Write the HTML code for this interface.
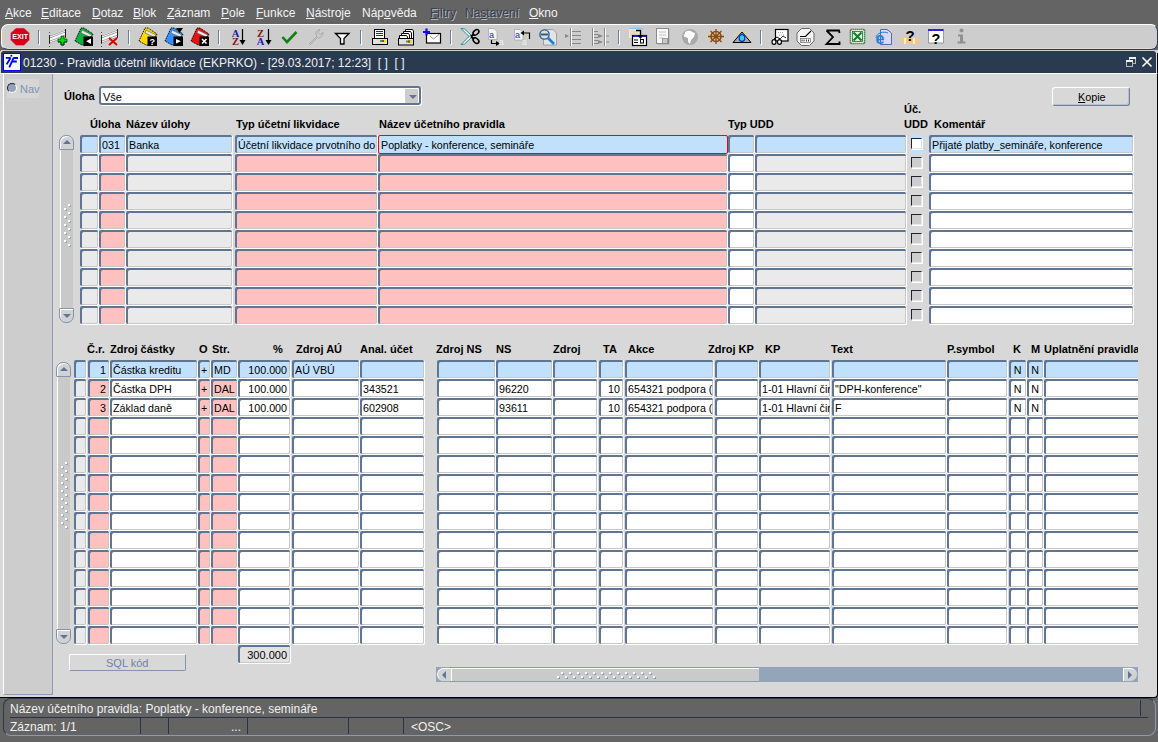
<!DOCTYPE html><html><head><meta charset='utf-8'><style>
*{margin:0;padding:0;box-sizing:border-box}
html,body{width:1158px;height:742px;overflow:hidden;background:#646464;font-family:"Liberation Sans", sans-serif;}
.a{position:absolute}
.t{position:absolute;white-space:pre;line-height:1}
.c{position:absolute;height:19px;border-radius:2px;padding-top:2px;padding-left:3px;border-right:1px solid #fff;border-bottom:1px solid #fff;box-shadow:inset 2px 2px 0 #607593,inset -1px -1px 0 #c8c8c8;overflow:hidden;font-size:10.7px;color:#000;white-space:pre;line-height:17px}
.bl{background:#c0e0fc}
.pk{background:#ffc0c0}
.gr{background:#eaeaea}
.wh{background:#fff}
.hd{position:absolute;font-size:11px;font-weight:bold;white-space:pre;line-height:1;color:#000}
.menu{position:absolute;top:6.5px;font-size:12px;color:#f4f4f4;white-space:pre;line-height:1}
.menu u{text-decoration:underline;text-underline-offset:1px;text-decoration-thickness:1px}
</style></head><body>
<div class='menu' style='left:5px;color:#f4f4f4'><u>A</u>kce</div>
<div class='menu' style='left:41px;color:#f4f4f4'><u>E</u>ditace</div>
<div class='menu' style='left:92px;color:#f4f4f4'><u>D</u>otaz</div>
<div class='menu' style='left:133px;color:#f4f4f4'><u>B</u>lok</div>
<div class='menu' style='left:167px;color:#f4f4f4'><u>Z</u>áznam</div>
<div class='menu' style='left:221px;color:#f4f4f4'><u>P</u>ole</div>
<div class='menu' style='left:256px;color:#f4f4f4'><u>F</u>unkce</div>
<div class='menu' style='left:306px;color:#f4f4f4'><u>N</u>ástroje</div>
<div class='menu' style='left:362px;color:#f4f4f4'>Náp<u>o</u>věda</div>
<div class='menu' style='left:430px;color:#34405a;text-shadow:1px 1px 0 #b4b4b4'><u>F</u>iltry</div>
<div class='menu' style='left:465px;color:#34405a;text-shadow:1px 1px 0 #b4b4b4'>Na<u>s</u>tavení</div>
<div class='menu' style='left:529px;color:#f4f4f4'><u>O</u>kno</div>
<div class='a' style='left:0;top:23px;width:1158px;height:28px;background:#646464'></div>
<div class='a' style='left:1px;top:24px;width:1157px;height:26px;background:#cdcdcd;border-radius:7px;border-top:1px solid #fff;border-left:1px solid #fff;border-bottom:1px solid #2a3a50;border-right:1px solid #2a3a50;box-shadow:inset 0 -1px 0 #dcdcdc'></div>
<div class='a' style='left:1px;top:50px;width:1157px;height:1px;background:#d0d0d0'></div>
<svg class='a' style='left:0;top:0' width='1158' height='50'><polygon points='16,28 24,28 29.5,33 29.5,40 24,45.5 16,45.5 10.5,40 10.5,33' fill='#d6001c' stroke='#a8c8c0' stroke-width='0.5'/><text x='20.2' y='39' font-size='7.2' font-weight='bold' fill='#fff' text-anchor='middle' font-family='Liberation Sans' letter-spacing='0'>EXIT</text><rect x='38' y='30' width='1' height='14' fill='#6a7f9c'/><rect x='39' y='31' width='1' height='14' fill='#fff'/><rect x='128' y='30' width='1' height='14' fill='#6a7f9c'/><rect x='129' y='31' width='1' height='14' fill='#fff'/><rect x='218' y='30' width='1' height='14' fill='#6a7f9c'/><rect x='219' y='31' width='1' height='14' fill='#fff'/><rect x='360' y='30' width='1' height='14' fill='#6a7f9c'/><rect x='361' y='31' width='1' height='14' fill='#fff'/><rect x='450' y='30' width='1' height='14' fill='#6a7f9c'/><rect x='451' y='31' width='1' height='14' fill='#fff'/><rect x='618' y='30' width='1' height='14' fill='#6a7f9c'/><rect x='619' y='31' width='1' height='14' fill='#fff'/><rect x='760' y='30' width='1' height='14' fill='#6a7f9c'/><rect x='761' y='31' width='1' height='14' fill='#fff'/><g transform='translate(49,29)'><polygon points='0.5,6.5 16.5,0.5 16.5,8.5 0.5,14.5' fill='#fff'/><path d='M0.5,7.2 L16.5,1.2 M0.5,9 L16.5,3 M0.5,12.2 L16.5,6.2 M0.5,14 L16.5,8' stroke='#8a8a8a' stroke-width='0.8'/><path d='M0.5,6 V14.8 M16.5,0 V8.8' stroke='#222' stroke-width='1'/><path d='M0.5,3 V4 M0.5,17 V18' stroke='#555' stroke-width='1'/></g><path d='M58,39 h3 v-3 h3 v3 h3 v3 h-3 v3 h-3 v-3 h-3 z' fill='#00e000' stroke='#003828' stroke-width='0.7'/><path d='M58,42 h3 v3 h3 v-3 h3' stroke='#003020' stroke-width='0.8' fill='none'/><g transform='translate(75,28)'><polygon points='0,13 6,0 9,0 18,6 17,8 9,17 7,17' fill='#10b040' stroke='#000' stroke-width='1' stroke-dasharray='1.2,0.8'/><polygon points='7,2 17,7 15,9 6,5' fill='#e8e8e8' stroke='#555' stroke-width='0.6'/><rect x='8.5' y='8.5' width='9.5' height='9.5' fill='#000'/><polygon points='16,10.5 11,13.3 16,16' fill='#fff'/></g><g transform='translate(101,29)'><polygon points='0.5,6.5 16.5,0.5 16.5,8.5 0.5,14.5' fill='#fff'/><path d='M0.5,7.2 L16.5,1.2 M0.5,9 L16.5,3 M0.5,12.2 L16.5,6.2 M0.5,14 L16.5,8' stroke='#8a8a8a' stroke-width='0.8'/><path d='M0.5,6 V14.8 M16.5,0 V8.8' stroke='#222' stroke-width='1'/><path d='M0.5,3 V4 M0.5,17 V18' stroke='#555' stroke-width='1'/></g><path d='M109,38 L117,45 M117,38 L109,45' stroke='#e00000' stroke-width='2'/><g transform='translate(139,28)'><polygon points='0,13 6,0 9,0 18,6 17,8 9,17 7,17' fill='#ffd800' stroke='#000' stroke-width='1' stroke-dasharray='1.2,0.8'/><polygon points='7,2 17,7 15,9 6,5' fill='#e8e8e8' stroke='#555' stroke-width='0.6'/><rect x='8.5' y='8.5' width='9.5' height='9.5' fill='#000'/><text x='13.3' y='16.6' font-size='9' font-weight='bold' fill='#fff' text-anchor='middle' font-family='Liberation Sans'>?</text></g><g transform='translate(165,28)'><polygon points='0,13 6,0 9,0 18,6 17,8 9,17 7,17' fill='#3090ff' stroke='#000' stroke-width='1' stroke-dasharray='1.2,0.8'/><polygon points='7,2 17,7 15,9 6,5' fill='#e8e8e8' stroke='#555' stroke-width='0.6'/><rect x='8.5' y='8.5' width='9.5' height='9.5' fill='#000'/><polygon points='11,11 16,13.3 11,15.6' fill='#fff'/><polygon points='11,0 18,0 14.5,5' fill='#000'/></g><g transform='translate(191,28)'><polygon points='0,13 6,0 9,0 18,6 17,8 9,17 7,17' fill='#ee1010' stroke='#000' stroke-width='1' stroke-dasharray='1.2,0.8'/><polygon points='7,2 17,7 15,9 6,5' fill='#e8e8e8' stroke='#555' stroke-width='0.6'/><rect x='8.5' y='8.5' width='9.5' height='9.5' fill='#000'/><path d='M11,11 L15.5,15.5 M15.5,11 L11,15.5' stroke='#fff' stroke-width='1.6'/></g><text x='235.5' y='36.5' font-size='10.5' font-weight='bold' fill='#1818a0' text-anchor='middle' font-family='Liberation Serif'>A</text><text x='235.5' y='44.5' font-size='10.5' font-weight='bold' fill='#8a1010' text-anchor='middle' font-family='Liberation Serif'>Z</text><path d='M242.5,29 V41' stroke='#000' stroke-width='1.2'/><polygon points='239.5,40 245.5,40 242.5,45' fill='#000'/><text x='260.5' y='36.5' font-size='10.5' font-weight='bold' fill='#8a1010' text-anchor='middle' font-family='Liberation Serif'>Z</text><text x='260.5' y='44.5' font-size='10.5' font-weight='bold' fill='#1818a0' text-anchor='middle' font-family='Liberation Serif'>A</text><path d='M268.5,29 V41' stroke='#000' stroke-width='1.2'/><polygon points='265.5,40 271.5,40 268.5,45' fill='#000'/><path d='M282.5,37 L287,42 L296.5,32' stroke='#108010' stroke-width='2.6' fill='none'/><path d='M309,44 L317,36 C315,33 316,30 320,29.5 L318,32.5 L320,34.5 L323,32.5 C323.5,36 320,38.5 317.5,37.5 L310,45' stroke='#a8a8a8' stroke-width='1' fill='none'/><polygon points='335.5,33.5 349,33.5 344,38.5 344,44 340.5,44 340.5,38.5' fill='#fff' stroke='#000' stroke-width='1.3'/><rect x='374.5' y='29.5' width='10' height='9' fill='#fff' stroke='#000'/><path d='M376,31.5 h7 M376,33.5 h7 M376,35.5 h7' stroke='#2020c8' stroke-width='1'/><rect x='372.5' y='38.5' width='15' height='6' fill='#e0e0e0' stroke='#000'/><rect x='380' y='40' width='6' height='2' fill='#20c020'/><rect x='382' y='40' width='2' height='2' fill='#e02020'/><rect x='384' y='40' width='2' height='2' fill='#f0e020'/><path d='M405.5,38 V29.5 H412.5 L413.5,31 V38' fill='#fff' stroke='#000'/><path d='M403.5,38 V31.5 H410.5 L411.5,33 V38' fill='#fff' stroke='#000'/><path d='M401.5,38 V33.5 H408.5 L409.5,35 V38' fill='#fff' stroke='#000'/><path d='M399.5,38 V35.5 H406.5 L407.5,37 V38' fill='#fff' stroke='#000'/><rect x='398.5' y='38.5' width='15' height='6.5' fill='#e0e0e0' stroke='#000'/><rect x='406' y='40.5' width='6' height='2' fill='#20c020'/><rect x='408' y='40.5' width='2' height='2' fill='#e02020'/><rect x='410' y='40.5' width='2' height='2' fill='#f0e020'/><rect x='426.5' y='33.5' width='14' height='9.5' fill='#fff' stroke='#000' stroke-width='1.2'/><path d='M430,36 L433.5,39 L439,34.5' stroke='#444' stroke-width='0.6' fill='none'/><path d='M423,32 h7 M426.5,28.5 v7' stroke='#1010e0' stroke-width='2.2'/><polygon points='461,28.5 464.5,29 472,36 470,37.5' fill='#e8ffff' stroke='#2a8a8a' stroke-width='1'/><polygon points='461,44.5 464.5,44 472,37 470,35.5' fill='#e8ffff' stroke='#2a8a8a' stroke-width='1'/><path d='M471,36.5 L474,34 M471,36.5 L474,39' stroke='#000' stroke-width='2'/><ellipse cx='476' cy='32.3' rx='3.3' ry='2.2' transform='rotate(-40 476 32.3)' fill='none' stroke='#000' stroke-width='1.5'/><ellipse cx='476' cy='40.7' rx='3.3' ry='2.2' transform='rotate(40 476 40.7)' fill='none' stroke='#000' stroke-width='1.5'/><path d='M488.5,28.5 H494 L497,31.5 V39.5 H488.5 Z' fill='#f4f4f4' stroke='#999' stroke-width='0.6'/><text x='489' y='38' font-size='9' fill='#1818e8' font-family='Liberation Sans'>a</text><path d='M491.5,40 V43.5 H496' stroke='#000' stroke-width='1.2' fill='none'/><polygon points='496,41 500,43.5 496,46' fill='#000'/><text x='499' y='45' font-size='8.5' fill='#f0f0f0' font-family='Liberation Sans'>a</text><path d='M514.5,29.5 H520 L523,32.5 V40 H514.5 Z' fill='#f4f4f4' stroke='#999' stroke-width='0.6'/><text x='515' y='38' font-size='9' fill='#1818e8' font-family='Liberation Sans'>a</text><path d='M524,33 H529.5 V39' stroke='#000' stroke-width='1.2' fill='none'/><polygon points='524,30.5 520.5,33 524,35.5' fill='#000'/><text x='522' y='45' font-size='8.5' fill='#f0f0f0' font-family='Liberation Sans'>a</text><path d='M543.5,29.5 H553 L556.5,33 V45 H543.5 Z' fill='#e4e4e4' stroke='#888' stroke-width='0.7'/><circle cx='544.5' cy='34.5' r='4.6' fill='#c8e8f0' stroke='#3a5a8a' stroke-width='1.4'/><rect x='541' y='33.5' width='7' height='2' fill='#555'/><path d='M548,38 L554,44' stroke='#1880e0' stroke-width='2.6'/><path d='M570.5,28 V46' stroke='#888' stroke-width='1'/><path d='M571.5,28 V46' stroke='#fff' stroke-width='1'/><path d='M572,31.5 h9 M572,35.5 h9 M572,39.5 h9 M572,43.5 h9' stroke='#888' stroke-width='1'/><polygon points='565,34 569,36 565,38' fill='#888'/><path d='M592.5,28 V46 M604.5,28 V46' stroke='#888' stroke-width='1'/><path d='M593.5,28 V46 M605.5,28 V46' stroke='#fff' stroke-width='1'/><path d='M594,31.5 h4 M594,34.5 h4 M594,37.5 h4 M594,40.5 h4 M594,43.5 h4 M606,36 h3 M606,42 h3' stroke='#888' stroke-width='1'/><polygon points='598,34 603,36 598,38' fill='#888'/><polygon points='598,40 603,42 598,44' fill='#888'/><rect x='629' y='28' width='12' height='10' fill='#f4e8d8'/><rect x='629' y='28' width='14' height='1' fill='#80c8f0'/><path d='M630,31 h8 M630,33 h8 M630,35 h6' stroke='#d8c8b0' stroke-width='0.8'/><rect x='632.5' y='35.5' width='14' height='10' fill='#fff' stroke='#000' stroke-width='1.2'/><rect x='633' y='35' width='13.5' height='2' fill='#1020c0'/><path d='M634,40 h4 M634,42.5 h4' stroke='#000' stroke-width='1'/><rect x='640.5' y='39.5' width='3' height='3.5' fill='none' stroke='#000' stroke-width='1'/><path d='M636,30.5 H640.5 V37' stroke='#000' stroke-width='1.3' fill='none'/><polygon points='637.5,35 643.5,35 640.5,39' fill='#000'/><rect x='658.5' y='29.5' width='11' height='15' fill='#aaa'/><rect x='656.5' y='28.5' width='12' height='15' fill='#fafafa' stroke='#8a8a8a' stroke-width='1'/><path d='M659,32 h7 M659,35 h7 M659,38 h4' stroke='#b0b0b0' stroke-width='0.8'/><rect x='662.5' y='38.5' width='5' height='5' fill='#c8c8c8' stroke='#8a8a8a' stroke-width='0.8'/><circle cx='690' cy='37' r='8' fill='#a8a8a8'/><path d='M685,32 C687,31 690,30 692,32 L695,33 L694,37 L691,40 L690,44 L688,42 L688,38 L685,37 Z' fill='#fff'/><path d='M684,34 L685,37' stroke='#fff' stroke-width='1'/><g stroke='#8a4a10' fill='none'><circle cx='716' cy='36.5' r='5' stroke-width='1.6'/><path d='M708,36.5 H724 M716,29 V44 M710.5,31 L721.5,42 M721.5,31 L710.5,42' stroke-width='1.3'/></g><circle cx='716' cy='36.5' r='1.5' fill='#8a4a10'/><polygon points='733,42.5 742,32 751,42.5' fill='#a8a8a8' stroke='#000' stroke-width='1'/><ellipse cx='742' cy='38' rx='2.8' ry='3.3' fill='#20d8f0' stroke='#1030c0' stroke-width='1.2'/><path d='M735,34 l1,1 M737,31.5 l1,1 M742,30 v1 M746.5,31.5 l-1,1 M749,34 l-1,1' stroke='#f0f000' stroke-width='1'/><rect x='775.5' y='29.5' width='12.5' height='11.5' fill='#fff' stroke='#000' stroke-width='1.2'/><path d='M778,32.5 h6 M779,35 h5' stroke='#888' stroke-width='0.8' stroke-dasharray='1,1'/><path d='M780,39 L783,36 L786,38' stroke='#000' stroke-width='0.8' fill='none'/><ellipse cx='774' cy='42' rx='2' ry='2.3' fill='#fff' stroke='#000' stroke-width='1.2'/><ellipse cx='779.5' cy='42' rx='2' ry='2.3' fill='#fff' stroke='#000' stroke-width='1.2'/><path d='M774,39 L777,37 L780,39' stroke='#000' stroke-width='1' fill='none'/><polygon points='801.5,28.5 809.5,28.5 814,33 814,41 809.5,45.5 801.5,45.5 797,41 797,33' fill='#f4f4f4' stroke='#6a6a6a' stroke-width='1'/><path d='M800,36.5 H805.5 L811,31' stroke='#000' stroke-width='1.2' fill='none'/><rect x='800.5' y='38.5' width='10' height='4' fill='#fff' stroke='#555' stroke-width='0.6'/><path d='M802,39.5 v2 M804,39.5 v2 M806.5,39.5 v2 M808.5,39.5 v2' stroke='#000' stroke-width='0.8'/><path d='M826.5,30.5 H839 L839.5,33 M826.5,30.5 L833,37 L826.5,44 H839.5 L839.5,41.5' stroke='#000' stroke-width='1.8' fill='none'/><rect x='850.5' y='29.5' width='14' height='14' fill='#fff' stroke='#107020' stroke-width='1.6' stroke-dasharray='1.2,0.8'/><rect x='852.5' y='31.5' width='10' height='10' fill='#e8f4e8' stroke='#107020' stroke-width='0.8'/><path d='M853.5,32.5 L861.5,40.5 M861.5,32.5 L853.5,40.5' stroke='#108030' stroke-width='2.2'/><path d='M880.5,29.5 H887 L891.5,33 V44.5 H880.5 Z' fill='#d8d8f8' stroke='#5a6aa8' stroke-width='1'/><text x='875.5' y='43.5' font-size='16' font-weight='bold' fill='#2080e0' font-family='Liberation Sans'>e</text><path d='M876,38 C876,33 884,31 888,33' stroke='#2080e0' stroke-width='1' fill='none'/><rect x='901' y='38' width='18' height='6' fill='#f8c880'/><rect x='904' y='38' width='2' height='6' fill='#fff0d0'/><rect x='913' y='38' width='2' height='6' fill='#fff0d0'/><text x='910' y='40.5' font-size='15' font-weight='bold' fill='#000' text-anchor='middle' font-family='Liberation Sans'>?</text><rect x='928.5' y='30' width='15' height='13' fill='#fff' stroke='#888' stroke-width='0.8'/><rect x='928' y='29' width='15.5' height='2' fill='#3020e0'/><text x='936' y='43.6' font-size='14.5' font-weight='bold' fill='#000' text-anchor='middle' font-family='Liberation Sans'>?</text><circle cx='961.5' cy='30.5' r='2' fill='#909090'/><path d='M958,34.5 H963 V41.5 H965.5 V43.5 H957.5 V41.5 H960 V36.5 H958 Z' fill='#909090'/></svg>
<div class='a' style='left:0;top:51px;width:1158px;height:22px;background:#d8d8d8'></div>
<div class='a' style='left:1px;top:51px;width:1155px;height:22px;background:#2a3a50;border-radius:3px 3px 0 0'></div>
<div class='a' style='left:1157px;top:53px;width:1px;height:22px;background:#000'></div>
<div class='a' style='left:3px;top:53px;width:18px;height:18px;background:#f6f6ee;border:1px solid #0000ff'></div>
<svg class='a' style='left:0;top:50px' width='24' height='24'><path d='M5.8,7.9 H10.8 M10.4,8.2 L6.6,14.4 M13.3,8 H18 M12.1,11.5 H16.8 M13.6,7.8 L9.3,17.4' stroke='#0000f0' stroke-width='1.8' fill='none'/><circle cx='11.4' cy='5.7' r='1' fill='#0000f0'/></svg>
<div class='t' style='left:23px;top:57px;font-size:12px;color:#f0f0f0'>01230 - Pravidla účetní likvidace (EKPRKO) - [29.03.2017; 12:23]  [ ]  [ ]</div>
<svg class='a' style='left:1120px;top:50px' width='38' height='26'><rect x='9.5' y='7.5' width='6' height='6' fill='none' stroke='#b8b8b8' stroke-width='1'/><rect x='9' y='7' width='7' height='2' fill='#f0f0f0'/><rect x='6.5' y='10.5' width='6' height='6' fill='#2a3a50' stroke='#b8b8b8' stroke-width='1'/><rect x='6' y='10' width='7' height='2' fill='#f0f0f0'/><path d='M22.5,7.5 L31.5,16.5 M31.5,7.5 L22.5,16.5' stroke='#fff' stroke-width='1.6'/></svg>
<div class='a' style='left:0px;top:73px;width:1158px;height:625px;background:#d8d8d8;border-top:1px solid #fff;border-right:1px solid #000;border-bottom:1px solid #000;border-radius:0 0 4px 0'></div>
<div class='a' style='left:3px;top:74px;width:50px;height:621px;background:#cdcdcd;border-left:1px solid #fff;border-right:1px solid #8a9bb4;border-bottom:1px solid #8a9bb4'></div>
<div class='a' style='left:7px;top:79px;width:32px;height:19px;background:#d6d6d6'></div>
<div class='a' style='left:7px;top:83px;width:10px;height:10px;border-radius:50%;background:#92a4bb;border-top:1px solid #223;border-left:1px solid #223;border-right:1px solid #fff;border-bottom:1px solid #fff'></div>
<div class='t' style='left:20px;top:84px;font-size:11px;color:#7f93b0'>Nav</div>
<div class='hd' style='left:64px;top:91px'>Úloha</div>
<div class='a' style='left:99px;top:86px;width:322px;height:19px;background:#fff;border:2px solid #607593;border-radius:3px;box-shadow:1px 1px 0 #fff'></div>
<div class='t' style='left:103px;top:92px;font-size:11px'>Vše</div>
<div class='a' style='left:405px;top:89px;width:13px;height:14px;background:#cccccc'></div>
<div class='a' style='left:409px;top:95px;width:0;height:0;border-left:4px solid transparent;border-right:4px solid transparent;border-top:4px solid #607593'></div>
<div class='a' style='left:1052px;top:87px;width:78px;height:19px;border-top:1px solid #fff;border-left:1px solid #fff;border-right:1px solid #6d7f99;border-bottom:1px solid #6d7f99;border-radius:3px;box-shadow:inset -1px -1px 0 #b8c0cc'></div>
<div class='t' style='left:1078px;top:92px;font-size:10.8px'><span style='text-decoration:underline'>K</span>opie</div>
<div class='hd' style='left:90px;top:119px'>Úloha</div>
<div class='hd' style='left:126px;top:119px'>Název úlohy</div>
<div class='hd' style='left:236px;top:119px'>Typ účetní likvidace</div>
<div class='hd' style='left:379px;top:119px'>Název účetního pravidla</div>
<div class='hd' style='left:728px;top:119px'>Typ UDD</div>
<div class='hd' style='left:904px;top:104px'>Úč.</div>
<div class='hd' style='left:904px;top:119px'>UDD</div>
<div class='hd' style='left:934px;top:119px'>Komentář</div>
<div class='c bl' style='left:80px;top:135px;width:19px;'></div>
<div class='c bl' style='left:99px;top:135px;width:27px;'>031</div>
<div class='c bl' style='left:126px;top:135px;width:107px;'>Banka</div>
<div class='c bl' style='left:235px;top:135px;width:143px;'>Účetní likvidace prvotního do</div>
<div class='c bl' style='left:378px;top:135px;width:350px;border:1px solid #f00;box-shadow:none;padding-left:2px;padding-top:1px;'>Poplatky - konference, semináře</div>
<div class='c bl' style='left:728px;top:135px;width:27px;'></div>
<div class='c bl' style='left:755px;top:135px;width:152px;'></div>
<div class='c bl' style='left:929px;top:135px;width:205px;'>Přijaté platby_semináře, konference</div>
<div class='a' style='left:911px;top:135px;width:13px;height:19px;background:#c0e0fc'></div>
<div class='a' style='left:911px;top:138px;width:11px;height:11px;background:#fff;border-top:1px solid #223;border-left:1px solid #223;border-right:1px solid #e4e4e4;border-bottom:1px solid #e4e4e4;box-shadow:1px 1px 0 #fff'></div>
<div class='c gr' style='left:80px;top:154px;width:19px;'></div>
<div class='c pk' style='left:99px;top:154px;width:27px;'></div>
<div class='c gr' style='left:126px;top:154px;width:107px;'></div>
<div class='c pk' style='left:235px;top:154px;width:143px;'></div>
<div class='c pk' style='left:378px;top:154px;width:350px;'></div>
<div class='c wh' style='left:728px;top:154px;width:27px;'></div>
<div class='c gr' style='left:755px;top:154px;width:152px;'></div>
<div class='c wh' style='left:929px;top:154px;width:205px;'></div>
<div class='a' style='left:911px;top:157px;width:11px;height:11px;background:#cdcdcd;border-top:1px solid #223;border-left:1px solid #223;border-right:1px solid #e8e8e8;border-bottom:1px solid #e8e8e8;box-shadow:1px 1px 0 #fff'></div>
<div class='c gr' style='left:80px;top:173px;width:19px;'></div>
<div class='c pk' style='left:99px;top:173px;width:27px;'></div>
<div class='c gr' style='left:126px;top:173px;width:107px;'></div>
<div class='c pk' style='left:235px;top:173px;width:143px;'></div>
<div class='c pk' style='left:378px;top:173px;width:350px;'></div>
<div class='c wh' style='left:728px;top:173px;width:27px;'></div>
<div class='c gr' style='left:755px;top:173px;width:152px;'></div>
<div class='c wh' style='left:929px;top:173px;width:205px;'></div>
<div class='a' style='left:911px;top:176px;width:11px;height:11px;background:#cdcdcd;border-top:1px solid #223;border-left:1px solid #223;border-right:1px solid #e8e8e8;border-bottom:1px solid #e8e8e8;box-shadow:1px 1px 0 #fff'></div>
<div class='c gr' style='left:80px;top:192px;width:19px;'></div>
<div class='c pk' style='left:99px;top:192px;width:27px;'></div>
<div class='c gr' style='left:126px;top:192px;width:107px;'></div>
<div class='c pk' style='left:235px;top:192px;width:143px;'></div>
<div class='c pk' style='left:378px;top:192px;width:350px;'></div>
<div class='c wh' style='left:728px;top:192px;width:27px;'></div>
<div class='c gr' style='left:755px;top:192px;width:152px;'></div>
<div class='c wh' style='left:929px;top:192px;width:205px;'></div>
<div class='a' style='left:911px;top:195px;width:11px;height:11px;background:#cdcdcd;border-top:1px solid #223;border-left:1px solid #223;border-right:1px solid #e8e8e8;border-bottom:1px solid #e8e8e8;box-shadow:1px 1px 0 #fff'></div>
<div class='c gr' style='left:80px;top:211px;width:19px;'></div>
<div class='c pk' style='left:99px;top:211px;width:27px;'></div>
<div class='c gr' style='left:126px;top:211px;width:107px;'></div>
<div class='c pk' style='left:235px;top:211px;width:143px;'></div>
<div class='c pk' style='left:378px;top:211px;width:350px;'></div>
<div class='c wh' style='left:728px;top:211px;width:27px;'></div>
<div class='c gr' style='left:755px;top:211px;width:152px;'></div>
<div class='c wh' style='left:929px;top:211px;width:205px;'></div>
<div class='a' style='left:911px;top:214px;width:11px;height:11px;background:#cdcdcd;border-top:1px solid #223;border-left:1px solid #223;border-right:1px solid #e8e8e8;border-bottom:1px solid #e8e8e8;box-shadow:1px 1px 0 #fff'></div>
<div class='c gr' style='left:80px;top:230px;width:19px;'></div>
<div class='c pk' style='left:99px;top:230px;width:27px;'></div>
<div class='c gr' style='left:126px;top:230px;width:107px;'></div>
<div class='c pk' style='left:235px;top:230px;width:143px;'></div>
<div class='c pk' style='left:378px;top:230px;width:350px;'></div>
<div class='c wh' style='left:728px;top:230px;width:27px;'></div>
<div class='c gr' style='left:755px;top:230px;width:152px;'></div>
<div class='c wh' style='left:929px;top:230px;width:205px;'></div>
<div class='a' style='left:911px;top:233px;width:11px;height:11px;background:#cdcdcd;border-top:1px solid #223;border-left:1px solid #223;border-right:1px solid #e8e8e8;border-bottom:1px solid #e8e8e8;box-shadow:1px 1px 0 #fff'></div>
<div class='c gr' style='left:80px;top:249px;width:19px;'></div>
<div class='c pk' style='left:99px;top:249px;width:27px;'></div>
<div class='c gr' style='left:126px;top:249px;width:107px;'></div>
<div class='c pk' style='left:235px;top:249px;width:143px;'></div>
<div class='c pk' style='left:378px;top:249px;width:350px;'></div>
<div class='c wh' style='left:728px;top:249px;width:27px;'></div>
<div class='c gr' style='left:755px;top:249px;width:152px;'></div>
<div class='c wh' style='left:929px;top:249px;width:205px;'></div>
<div class='a' style='left:911px;top:252px;width:11px;height:11px;background:#cdcdcd;border-top:1px solid #223;border-left:1px solid #223;border-right:1px solid #e8e8e8;border-bottom:1px solid #e8e8e8;box-shadow:1px 1px 0 #fff'></div>
<div class='c gr' style='left:80px;top:268px;width:19px;'></div>
<div class='c pk' style='left:99px;top:268px;width:27px;'></div>
<div class='c gr' style='left:126px;top:268px;width:107px;'></div>
<div class='c pk' style='left:235px;top:268px;width:143px;'></div>
<div class='c pk' style='left:378px;top:268px;width:350px;'></div>
<div class='c wh' style='left:728px;top:268px;width:27px;'></div>
<div class='c gr' style='left:755px;top:268px;width:152px;'></div>
<div class='c wh' style='left:929px;top:268px;width:205px;'></div>
<div class='a' style='left:911px;top:271px;width:11px;height:11px;background:#cdcdcd;border-top:1px solid #223;border-left:1px solid #223;border-right:1px solid #e8e8e8;border-bottom:1px solid #e8e8e8;box-shadow:1px 1px 0 #fff'></div>
<div class='c gr' style='left:80px;top:287px;width:19px;'></div>
<div class='c pk' style='left:99px;top:287px;width:27px;'></div>
<div class='c gr' style='left:126px;top:287px;width:107px;'></div>
<div class='c pk' style='left:235px;top:287px;width:143px;'></div>
<div class='c pk' style='left:378px;top:287px;width:350px;'></div>
<div class='c wh' style='left:728px;top:287px;width:27px;'></div>
<div class='c gr' style='left:755px;top:287px;width:152px;'></div>
<div class='c wh' style='left:929px;top:287px;width:205px;'></div>
<div class='a' style='left:911px;top:290px;width:11px;height:11px;background:#cdcdcd;border-top:1px solid #223;border-left:1px solid #223;border-right:1px solid #e8e8e8;border-bottom:1px solid #e8e8e8;box-shadow:1px 1px 0 #fff'></div>
<div class='c gr' style='left:80px;top:306px;width:19px;'></div>
<div class='c pk' style='left:99px;top:306px;width:27px;'></div>
<div class='c gr' style='left:126px;top:306px;width:107px;'></div>
<div class='c pk' style='left:235px;top:306px;width:143px;'></div>
<div class='c pk' style='left:378px;top:306px;width:350px;'></div>
<div class='c wh' style='left:728px;top:306px;width:27px;'></div>
<div class='c gr' style='left:755px;top:306px;width:152px;'></div>
<div class='c wh' style='left:929px;top:306px;width:205px;'></div>
<div class='a' style='left:911px;top:309px;width:11px;height:11px;background:#cdcdcd;border-top:1px solid #223;border-left:1px solid #223;border-right:1px solid #e8e8e8;border-bottom:1px solid #e8e8e8;box-shadow:1px 1px 0 #fff'></div>
<div class='a' style='left:60px;top:143px;width:13px;height:173px;background:#c9c9c9;border-left:1px solid #fff'></div>
<div class='a' style='left:59px;top:135px;width:15px;height:15px;background:#d2d2d2;border:1px solid #8293ad;border-radius:7px 7px 1px 1px;box-shadow:inset 1px 1px 0 #fff'></div>
<div class='a' style='left:63px;top:140px;width:0;height:0;border-left:4px solid transparent;border-right:4px solid transparent;border-bottom:4px solid #607593'></div>
<div class='a' style='left:59px;top:308px;width:15px;height:15px;background:#d2d2d2;border:1px solid #8293ad;border-radius:1px 1px 7px 7px;box-shadow:inset 1px 1px 0 #fff'></div>
<div class='a' style='left:63px;top:314px;width:0;height:0;border-left:4px solid transparent;border-right:4px solid transparent;border-top:4px solid #607593'></div>
<div class='a' style='left:68px;top:204px;width:2px;height:2px;background:#fff;box-shadow:1px 1px 0 #9aa'></div><div class='a' style='left:64px;top:208px;width:2px;height:2px;background:#fff;box-shadow:1px 1px 0 #9aa'></div><div class='a' style='left:68px;top:212px;width:2px;height:2px;background:#fff;box-shadow:1px 1px 0 #9aa'></div><div class='a' style='left:64px;top:216px;width:2px;height:2px;background:#fff;box-shadow:1px 1px 0 #9aa'></div><div class='a' style='left:68px;top:220px;width:2px;height:2px;background:#fff;box-shadow:1px 1px 0 #9aa'></div><div class='a' style='left:64px;top:224px;width:2px;height:2px;background:#fff;box-shadow:1px 1px 0 #9aa'></div><div class='a' style='left:68px;top:228px;width:2px;height:2px;background:#fff;box-shadow:1px 1px 0 #9aa'></div><div class='a' style='left:64px;top:232px;width:2px;height:2px;background:#fff;box-shadow:1px 1px 0 #9aa'></div><div class='a' style='left:68px;top:236px;width:2px;height:2px;background:#fff;box-shadow:1px 1px 0 #9aa'></div><div class='a' style='left:64px;top:240px;width:2px;height:2px;background:#fff;box-shadow:1px 1px 0 #9aa'></div><div class='a' style='left:68px;top:244px;width:2px;height:2px;background:#fff;box-shadow:1px 1px 0 #9aa'></div>
<div class='hd' style='left:87px;top:344px;'>Č.r.</div>
<div class='hd' style='left:110px;top:344px;'>Zdroj částky</div>
<div class='hd' style='left:199px;top:344px;'>O</div>
<div class='hd' style='left:212px;top:344px;'>Str.</div>
<div class='hd' style='left:273px;top:344px;'>%</div>
<div class='hd' style='left:296px;top:344px;'>Zdroj AÚ</div>
<div class='hd' style='left:360px;top:344px;'>Anal. účet</div>
<div class='hd' style='left:436px;top:344px;'>Zdroj NS</div>
<div class='hd' style='left:496px;top:344px;'>NS</div>
<div class='hd' style='left:553px;top:344px;'>Zdroj</div>
<div class='hd' style='left:603px;top:344px;'>TA</div>
<div class='hd' style='left:628px;top:344px;'>Akce</div>
<div class='hd' style='left:708px;top:344px;'>Zdroj KP</div>
<div class='hd' style='left:765px;top:344px;'>KP</div>
<div class='hd' style='left:831px;top:344px;'>Text</div>
<div class='hd' style='left:947px;top:344px;'>P.symbol</div>
<div class='hd' style='left:1013px;top:344px;'>K</div>
<div class='hd' style='left:1031px;top:344px;'>M</div>
<div class='hd' style='left:1044px;top:344px;width:94px;overflow:hidden;'>Uplatnění pravidla</div>
<div class='a' style='left:0;top:0;width:1138px;height:742px;overflow:hidden'>
<div class='c bl' style='left:74px;top:360px;width:13px;'></div>
<div class='c bl' style='left:88px;top:360px;width:22px;text-align:right;padding-right:3px;'>1</div>
<div class='c bl' style='left:110px;top:360px;width:88px;'>Částka kreditu</div>
<div class='c bl' style='left:198px;top:360px;width:13px;text-align:center;padding-left:0;'>+</div>
<div class='c bl' style='left:211px;top:360px;width:27px;'>MD</div>
<div class='c bl' style='left:238px;top:360px;width:53px;text-align:right;padding-right:3px;'>100.000</div>
<div class='c bl' style='left:292px;top:360px;width:68px;'>AÚ VBÚ</div>
<div class='c bl' style='left:360px;top:360px;width:65px;'></div>
<div class='c bl' style='left:437px;top:360px;width:59px;'></div>
<div class='c bl' style='left:496px;top:360px;width:57px;'></div>
<div class='c bl' style='left:553px;top:360px;width:45px;'></div>
<div class='c bl' style='left:599px;top:360px;width:25px;text-align:right;padding-right:3px;'></div>
<div class='c bl' style='left:625px;top:360px;width:89px;'></div>
<div class='c bl' style='left:715px;top:360px;width:44px;'></div>
<div class='c bl' style='left:759px;top:360px;width:72px;'></div>
<div class='c bl' style='left:832px;top:360px;width:115px;'></div>
<div class='c bl' style='left:947px;top:360px;width:61px;'></div>
<div class='c bl' style='left:1009px;top:360px;width:18px;text-align:center;padding-left:0;'>N</div>
<div class='c bl' style='left:1027px;top:360px;width:17px;text-align:center;padding-left:0;'>N</div>
<div class='c bl' style='left:1044px;top:360px;width:120px;'></div>
<div class='c gr' style='left:74px;top:379px;width:13px;'></div>
<div class='c pk' style='left:88px;top:379px;width:22px;text-align:right;padding-right:3px;'>2</div>
<div class='c wh' style='left:110px;top:379px;width:88px;'>Částka DPH</div>
<div class='c pk' style='left:198px;top:379px;width:13px;text-align:center;padding-left:0;'>+</div>
<div class='c pk' style='left:211px;top:379px;width:27px;'>DAL</div>
<div class='c wh' style='left:238px;top:379px;width:53px;text-align:right;padding-right:3px;'>100.000</div>
<div class='c wh' style='left:292px;top:379px;width:68px;'></div>
<div class='c wh' style='left:360px;top:379px;width:65px;'>343521</div>
<div class='c wh' style='left:437px;top:379px;width:59px;'></div>
<div class='c wh' style='left:496px;top:379px;width:57px;'>96220</div>
<div class='c wh' style='left:553px;top:379px;width:45px;'></div>
<div class='c wh' style='left:599px;top:379px;width:25px;text-align:right;padding-right:3px;'>10</div>
<div class='c wh' style='left:625px;top:379px;width:89px;'>654321 podpora (</div>
<div class='c wh' style='left:715px;top:379px;width:44px;'></div>
<div class='c wh' style='left:759px;top:379px;width:72px;'>1-01 Hlavní činn</div>
<div class='c wh' style='left:832px;top:379px;width:115px;'>"DPH-konference"</div>
<div class='c wh' style='left:947px;top:379px;width:61px;'></div>
<div class='c wh' style='left:1009px;top:379px;width:18px;text-align:center;padding-left:0;'>N</div>
<div class='c wh' style='left:1027px;top:379px;width:17px;text-align:center;padding-left:0;'>N</div>
<div class='c wh' style='left:1044px;top:379px;width:120px;'></div>
<div class='c gr' style='left:74px;top:398px;width:13px;'></div>
<div class='c pk' style='left:88px;top:398px;width:22px;text-align:right;padding-right:3px;'>3</div>
<div class='c wh' style='left:110px;top:398px;width:88px;'>Základ daně</div>
<div class='c pk' style='left:198px;top:398px;width:13px;text-align:center;padding-left:0;'>+</div>
<div class='c pk' style='left:211px;top:398px;width:27px;'>DAL</div>
<div class='c wh' style='left:238px;top:398px;width:53px;text-align:right;padding-right:3px;'>100.000</div>
<div class='c wh' style='left:292px;top:398px;width:68px;'></div>
<div class='c wh' style='left:360px;top:398px;width:65px;'>602908</div>
<div class='c wh' style='left:437px;top:398px;width:59px;'></div>
<div class='c wh' style='left:496px;top:398px;width:57px;'>93611</div>
<div class='c wh' style='left:553px;top:398px;width:45px;'></div>
<div class='c wh' style='left:599px;top:398px;width:25px;text-align:right;padding-right:3px;'>10</div>
<div class='c wh' style='left:625px;top:398px;width:89px;'>654321 podpora (</div>
<div class='c wh' style='left:715px;top:398px;width:44px;'></div>
<div class='c wh' style='left:759px;top:398px;width:72px;'>1-01 Hlavní činn</div>
<div class='c wh' style='left:832px;top:398px;width:115px;'>F</div>
<div class='c wh' style='left:947px;top:398px;width:61px;'></div>
<div class='c wh' style='left:1009px;top:398px;width:18px;text-align:center;padding-left:0;'>N</div>
<div class='c wh' style='left:1027px;top:398px;width:17px;text-align:center;padding-left:0;'>N</div>
<div class='c wh' style='left:1044px;top:398px;width:120px;'></div>
<div class='c gr' style='left:74px;top:417px;width:13px;'></div>
<div class='c pk' style='left:88px;top:417px;width:22px;text-align:right;padding-right:3px;'></div>
<div class='c wh' style='left:110px;top:417px;width:88px;'></div>
<div class='c pk' style='left:198px;top:417px;width:13px;text-align:center;padding-left:0;'></div>
<div class='c pk' style='left:211px;top:417px;width:27px;'></div>
<div class='c wh' style='left:238px;top:417px;width:53px;text-align:right;padding-right:3px;'></div>
<div class='c wh' style='left:292px;top:417px;width:68px;'></div>
<div class='c wh' style='left:360px;top:417px;width:65px;'></div>
<div class='c wh' style='left:437px;top:417px;width:59px;'></div>
<div class='c wh' style='left:496px;top:417px;width:57px;'></div>
<div class='c wh' style='left:553px;top:417px;width:45px;'></div>
<div class='c wh' style='left:599px;top:417px;width:25px;text-align:right;padding-right:3px;'></div>
<div class='c wh' style='left:625px;top:417px;width:89px;'></div>
<div class='c wh' style='left:715px;top:417px;width:44px;'></div>
<div class='c wh' style='left:759px;top:417px;width:72px;'></div>
<div class='c wh' style='left:832px;top:417px;width:115px;'></div>
<div class='c wh' style='left:947px;top:417px;width:61px;'></div>
<div class='c wh' style='left:1009px;top:417px;width:18px;text-align:center;padding-left:0;'></div>
<div class='c wh' style='left:1027px;top:417px;width:17px;text-align:center;padding-left:0;'></div>
<div class='c wh' style='left:1044px;top:417px;width:120px;'></div>
<div class='c gr' style='left:74px;top:436px;width:13px;'></div>
<div class='c pk' style='left:88px;top:436px;width:22px;text-align:right;padding-right:3px;'></div>
<div class='c wh' style='left:110px;top:436px;width:88px;'></div>
<div class='c pk' style='left:198px;top:436px;width:13px;text-align:center;padding-left:0;'></div>
<div class='c pk' style='left:211px;top:436px;width:27px;'></div>
<div class='c wh' style='left:238px;top:436px;width:53px;text-align:right;padding-right:3px;'></div>
<div class='c wh' style='left:292px;top:436px;width:68px;'></div>
<div class='c wh' style='left:360px;top:436px;width:65px;'></div>
<div class='c wh' style='left:437px;top:436px;width:59px;'></div>
<div class='c wh' style='left:496px;top:436px;width:57px;'></div>
<div class='c wh' style='left:553px;top:436px;width:45px;'></div>
<div class='c wh' style='left:599px;top:436px;width:25px;text-align:right;padding-right:3px;'></div>
<div class='c wh' style='left:625px;top:436px;width:89px;'></div>
<div class='c wh' style='left:715px;top:436px;width:44px;'></div>
<div class='c wh' style='left:759px;top:436px;width:72px;'></div>
<div class='c wh' style='left:832px;top:436px;width:115px;'></div>
<div class='c wh' style='left:947px;top:436px;width:61px;'></div>
<div class='c wh' style='left:1009px;top:436px;width:18px;text-align:center;padding-left:0;'></div>
<div class='c wh' style='left:1027px;top:436px;width:17px;text-align:center;padding-left:0;'></div>
<div class='c wh' style='left:1044px;top:436px;width:120px;'></div>
<div class='c gr' style='left:74px;top:455px;width:13px;'></div>
<div class='c pk' style='left:88px;top:455px;width:22px;text-align:right;padding-right:3px;'></div>
<div class='c wh' style='left:110px;top:455px;width:88px;'></div>
<div class='c pk' style='left:198px;top:455px;width:13px;text-align:center;padding-left:0;'></div>
<div class='c pk' style='left:211px;top:455px;width:27px;'></div>
<div class='c wh' style='left:238px;top:455px;width:53px;text-align:right;padding-right:3px;'></div>
<div class='c wh' style='left:292px;top:455px;width:68px;'></div>
<div class='c wh' style='left:360px;top:455px;width:65px;'></div>
<div class='c wh' style='left:437px;top:455px;width:59px;'></div>
<div class='c wh' style='left:496px;top:455px;width:57px;'></div>
<div class='c wh' style='left:553px;top:455px;width:45px;'></div>
<div class='c wh' style='left:599px;top:455px;width:25px;text-align:right;padding-right:3px;'></div>
<div class='c wh' style='left:625px;top:455px;width:89px;'></div>
<div class='c wh' style='left:715px;top:455px;width:44px;'></div>
<div class='c wh' style='left:759px;top:455px;width:72px;'></div>
<div class='c wh' style='left:832px;top:455px;width:115px;'></div>
<div class='c wh' style='left:947px;top:455px;width:61px;'></div>
<div class='c wh' style='left:1009px;top:455px;width:18px;text-align:center;padding-left:0;'></div>
<div class='c wh' style='left:1027px;top:455px;width:17px;text-align:center;padding-left:0;'></div>
<div class='c wh' style='left:1044px;top:455px;width:120px;'></div>
<div class='c gr' style='left:74px;top:474px;width:13px;'></div>
<div class='c pk' style='left:88px;top:474px;width:22px;text-align:right;padding-right:3px;'></div>
<div class='c wh' style='left:110px;top:474px;width:88px;'></div>
<div class='c pk' style='left:198px;top:474px;width:13px;text-align:center;padding-left:0;'></div>
<div class='c pk' style='left:211px;top:474px;width:27px;'></div>
<div class='c wh' style='left:238px;top:474px;width:53px;text-align:right;padding-right:3px;'></div>
<div class='c wh' style='left:292px;top:474px;width:68px;'></div>
<div class='c wh' style='left:360px;top:474px;width:65px;'></div>
<div class='c wh' style='left:437px;top:474px;width:59px;'></div>
<div class='c wh' style='left:496px;top:474px;width:57px;'></div>
<div class='c wh' style='left:553px;top:474px;width:45px;'></div>
<div class='c wh' style='left:599px;top:474px;width:25px;text-align:right;padding-right:3px;'></div>
<div class='c wh' style='left:625px;top:474px;width:89px;'></div>
<div class='c wh' style='left:715px;top:474px;width:44px;'></div>
<div class='c wh' style='left:759px;top:474px;width:72px;'></div>
<div class='c wh' style='left:832px;top:474px;width:115px;'></div>
<div class='c wh' style='left:947px;top:474px;width:61px;'></div>
<div class='c wh' style='left:1009px;top:474px;width:18px;text-align:center;padding-left:0;'></div>
<div class='c wh' style='left:1027px;top:474px;width:17px;text-align:center;padding-left:0;'></div>
<div class='c wh' style='left:1044px;top:474px;width:120px;'></div>
<div class='c gr' style='left:74px;top:493px;width:13px;'></div>
<div class='c pk' style='left:88px;top:493px;width:22px;text-align:right;padding-right:3px;'></div>
<div class='c wh' style='left:110px;top:493px;width:88px;'></div>
<div class='c pk' style='left:198px;top:493px;width:13px;text-align:center;padding-left:0;'></div>
<div class='c pk' style='left:211px;top:493px;width:27px;'></div>
<div class='c wh' style='left:238px;top:493px;width:53px;text-align:right;padding-right:3px;'></div>
<div class='c wh' style='left:292px;top:493px;width:68px;'></div>
<div class='c wh' style='left:360px;top:493px;width:65px;'></div>
<div class='c wh' style='left:437px;top:493px;width:59px;'></div>
<div class='c wh' style='left:496px;top:493px;width:57px;'></div>
<div class='c wh' style='left:553px;top:493px;width:45px;'></div>
<div class='c wh' style='left:599px;top:493px;width:25px;text-align:right;padding-right:3px;'></div>
<div class='c wh' style='left:625px;top:493px;width:89px;'></div>
<div class='c wh' style='left:715px;top:493px;width:44px;'></div>
<div class='c wh' style='left:759px;top:493px;width:72px;'></div>
<div class='c wh' style='left:832px;top:493px;width:115px;'></div>
<div class='c wh' style='left:947px;top:493px;width:61px;'></div>
<div class='c wh' style='left:1009px;top:493px;width:18px;text-align:center;padding-left:0;'></div>
<div class='c wh' style='left:1027px;top:493px;width:17px;text-align:center;padding-left:0;'></div>
<div class='c wh' style='left:1044px;top:493px;width:120px;'></div>
<div class='c gr' style='left:74px;top:512px;width:13px;'></div>
<div class='c pk' style='left:88px;top:512px;width:22px;text-align:right;padding-right:3px;'></div>
<div class='c wh' style='left:110px;top:512px;width:88px;'></div>
<div class='c pk' style='left:198px;top:512px;width:13px;text-align:center;padding-left:0;'></div>
<div class='c pk' style='left:211px;top:512px;width:27px;'></div>
<div class='c wh' style='left:238px;top:512px;width:53px;text-align:right;padding-right:3px;'></div>
<div class='c wh' style='left:292px;top:512px;width:68px;'></div>
<div class='c wh' style='left:360px;top:512px;width:65px;'></div>
<div class='c wh' style='left:437px;top:512px;width:59px;'></div>
<div class='c wh' style='left:496px;top:512px;width:57px;'></div>
<div class='c wh' style='left:553px;top:512px;width:45px;'></div>
<div class='c wh' style='left:599px;top:512px;width:25px;text-align:right;padding-right:3px;'></div>
<div class='c wh' style='left:625px;top:512px;width:89px;'></div>
<div class='c wh' style='left:715px;top:512px;width:44px;'></div>
<div class='c wh' style='left:759px;top:512px;width:72px;'></div>
<div class='c wh' style='left:832px;top:512px;width:115px;'></div>
<div class='c wh' style='left:947px;top:512px;width:61px;'></div>
<div class='c wh' style='left:1009px;top:512px;width:18px;text-align:center;padding-left:0;'></div>
<div class='c wh' style='left:1027px;top:512px;width:17px;text-align:center;padding-left:0;'></div>
<div class='c wh' style='left:1044px;top:512px;width:120px;'></div>
<div class='c gr' style='left:74px;top:531px;width:13px;'></div>
<div class='c pk' style='left:88px;top:531px;width:22px;text-align:right;padding-right:3px;'></div>
<div class='c wh' style='left:110px;top:531px;width:88px;'></div>
<div class='c pk' style='left:198px;top:531px;width:13px;text-align:center;padding-left:0;'></div>
<div class='c pk' style='left:211px;top:531px;width:27px;'></div>
<div class='c wh' style='left:238px;top:531px;width:53px;text-align:right;padding-right:3px;'></div>
<div class='c wh' style='left:292px;top:531px;width:68px;'></div>
<div class='c wh' style='left:360px;top:531px;width:65px;'></div>
<div class='c wh' style='left:437px;top:531px;width:59px;'></div>
<div class='c wh' style='left:496px;top:531px;width:57px;'></div>
<div class='c wh' style='left:553px;top:531px;width:45px;'></div>
<div class='c wh' style='left:599px;top:531px;width:25px;text-align:right;padding-right:3px;'></div>
<div class='c wh' style='left:625px;top:531px;width:89px;'></div>
<div class='c wh' style='left:715px;top:531px;width:44px;'></div>
<div class='c wh' style='left:759px;top:531px;width:72px;'></div>
<div class='c wh' style='left:832px;top:531px;width:115px;'></div>
<div class='c wh' style='left:947px;top:531px;width:61px;'></div>
<div class='c wh' style='left:1009px;top:531px;width:18px;text-align:center;padding-left:0;'></div>
<div class='c wh' style='left:1027px;top:531px;width:17px;text-align:center;padding-left:0;'></div>
<div class='c wh' style='left:1044px;top:531px;width:120px;'></div>
<div class='c gr' style='left:74px;top:550px;width:13px;'></div>
<div class='c pk' style='left:88px;top:550px;width:22px;text-align:right;padding-right:3px;'></div>
<div class='c wh' style='left:110px;top:550px;width:88px;'></div>
<div class='c pk' style='left:198px;top:550px;width:13px;text-align:center;padding-left:0;'></div>
<div class='c pk' style='left:211px;top:550px;width:27px;'></div>
<div class='c wh' style='left:238px;top:550px;width:53px;text-align:right;padding-right:3px;'></div>
<div class='c wh' style='left:292px;top:550px;width:68px;'></div>
<div class='c wh' style='left:360px;top:550px;width:65px;'></div>
<div class='c wh' style='left:437px;top:550px;width:59px;'></div>
<div class='c wh' style='left:496px;top:550px;width:57px;'></div>
<div class='c wh' style='left:553px;top:550px;width:45px;'></div>
<div class='c wh' style='left:599px;top:550px;width:25px;text-align:right;padding-right:3px;'></div>
<div class='c wh' style='left:625px;top:550px;width:89px;'></div>
<div class='c wh' style='left:715px;top:550px;width:44px;'></div>
<div class='c wh' style='left:759px;top:550px;width:72px;'></div>
<div class='c wh' style='left:832px;top:550px;width:115px;'></div>
<div class='c wh' style='left:947px;top:550px;width:61px;'></div>
<div class='c wh' style='left:1009px;top:550px;width:18px;text-align:center;padding-left:0;'></div>
<div class='c wh' style='left:1027px;top:550px;width:17px;text-align:center;padding-left:0;'></div>
<div class='c wh' style='left:1044px;top:550px;width:120px;'></div>
<div class='c gr' style='left:74px;top:569px;width:13px;'></div>
<div class='c pk' style='left:88px;top:569px;width:22px;text-align:right;padding-right:3px;'></div>
<div class='c wh' style='left:110px;top:569px;width:88px;'></div>
<div class='c pk' style='left:198px;top:569px;width:13px;text-align:center;padding-left:0;'></div>
<div class='c pk' style='left:211px;top:569px;width:27px;'></div>
<div class='c wh' style='left:238px;top:569px;width:53px;text-align:right;padding-right:3px;'></div>
<div class='c wh' style='left:292px;top:569px;width:68px;'></div>
<div class='c wh' style='left:360px;top:569px;width:65px;'></div>
<div class='c wh' style='left:437px;top:569px;width:59px;'></div>
<div class='c wh' style='left:496px;top:569px;width:57px;'></div>
<div class='c wh' style='left:553px;top:569px;width:45px;'></div>
<div class='c wh' style='left:599px;top:569px;width:25px;text-align:right;padding-right:3px;'></div>
<div class='c wh' style='left:625px;top:569px;width:89px;'></div>
<div class='c wh' style='left:715px;top:569px;width:44px;'></div>
<div class='c wh' style='left:759px;top:569px;width:72px;'></div>
<div class='c wh' style='left:832px;top:569px;width:115px;'></div>
<div class='c wh' style='left:947px;top:569px;width:61px;'></div>
<div class='c wh' style='left:1009px;top:569px;width:18px;text-align:center;padding-left:0;'></div>
<div class='c wh' style='left:1027px;top:569px;width:17px;text-align:center;padding-left:0;'></div>
<div class='c wh' style='left:1044px;top:569px;width:120px;'></div>
<div class='c gr' style='left:74px;top:588px;width:13px;'></div>
<div class='c pk' style='left:88px;top:588px;width:22px;text-align:right;padding-right:3px;'></div>
<div class='c wh' style='left:110px;top:588px;width:88px;'></div>
<div class='c pk' style='left:198px;top:588px;width:13px;text-align:center;padding-left:0;'></div>
<div class='c pk' style='left:211px;top:588px;width:27px;'></div>
<div class='c wh' style='left:238px;top:588px;width:53px;text-align:right;padding-right:3px;'></div>
<div class='c wh' style='left:292px;top:588px;width:68px;'></div>
<div class='c wh' style='left:360px;top:588px;width:65px;'></div>
<div class='c wh' style='left:437px;top:588px;width:59px;'></div>
<div class='c wh' style='left:496px;top:588px;width:57px;'></div>
<div class='c wh' style='left:553px;top:588px;width:45px;'></div>
<div class='c wh' style='left:599px;top:588px;width:25px;text-align:right;padding-right:3px;'></div>
<div class='c wh' style='left:625px;top:588px;width:89px;'></div>
<div class='c wh' style='left:715px;top:588px;width:44px;'></div>
<div class='c wh' style='left:759px;top:588px;width:72px;'></div>
<div class='c wh' style='left:832px;top:588px;width:115px;'></div>
<div class='c wh' style='left:947px;top:588px;width:61px;'></div>
<div class='c wh' style='left:1009px;top:588px;width:18px;text-align:center;padding-left:0;'></div>
<div class='c wh' style='left:1027px;top:588px;width:17px;text-align:center;padding-left:0;'></div>
<div class='c wh' style='left:1044px;top:588px;width:120px;'></div>
<div class='c gr' style='left:74px;top:607px;width:13px;'></div>
<div class='c pk' style='left:88px;top:607px;width:22px;text-align:right;padding-right:3px;'></div>
<div class='c wh' style='left:110px;top:607px;width:88px;'></div>
<div class='c pk' style='left:198px;top:607px;width:13px;text-align:center;padding-left:0;'></div>
<div class='c pk' style='left:211px;top:607px;width:27px;'></div>
<div class='c wh' style='left:238px;top:607px;width:53px;text-align:right;padding-right:3px;'></div>
<div class='c wh' style='left:292px;top:607px;width:68px;'></div>
<div class='c wh' style='left:360px;top:607px;width:65px;'></div>
<div class='c wh' style='left:437px;top:607px;width:59px;'></div>
<div class='c wh' style='left:496px;top:607px;width:57px;'></div>
<div class='c wh' style='left:553px;top:607px;width:45px;'></div>
<div class='c wh' style='left:599px;top:607px;width:25px;text-align:right;padding-right:3px;'></div>
<div class='c wh' style='left:625px;top:607px;width:89px;'></div>
<div class='c wh' style='left:715px;top:607px;width:44px;'></div>
<div class='c wh' style='left:759px;top:607px;width:72px;'></div>
<div class='c wh' style='left:832px;top:607px;width:115px;'></div>
<div class='c wh' style='left:947px;top:607px;width:61px;'></div>
<div class='c wh' style='left:1009px;top:607px;width:18px;text-align:center;padding-left:0;'></div>
<div class='c wh' style='left:1027px;top:607px;width:17px;text-align:center;padding-left:0;'></div>
<div class='c wh' style='left:1044px;top:607px;width:120px;'></div>
<div class='c gr' style='left:74px;top:626px;width:13px;'></div>
<div class='c pk' style='left:88px;top:626px;width:22px;text-align:right;padding-right:3px;'></div>
<div class='c wh' style='left:110px;top:626px;width:88px;'></div>
<div class='c pk' style='left:198px;top:626px;width:13px;text-align:center;padding-left:0;'></div>
<div class='c pk' style='left:211px;top:626px;width:27px;'></div>
<div class='c wh' style='left:238px;top:626px;width:53px;text-align:right;padding-right:3px;'></div>
<div class='c wh' style='left:292px;top:626px;width:68px;'></div>
<div class='c wh' style='left:360px;top:626px;width:65px;'></div>
<div class='c wh' style='left:437px;top:626px;width:59px;'></div>
<div class='c wh' style='left:496px;top:626px;width:57px;'></div>
<div class='c wh' style='left:553px;top:626px;width:45px;'></div>
<div class='c wh' style='left:599px;top:626px;width:25px;text-align:right;padding-right:3px;'></div>
<div class='c wh' style='left:625px;top:626px;width:89px;'></div>
<div class='c wh' style='left:715px;top:626px;width:44px;'></div>
<div class='c wh' style='left:759px;top:626px;width:72px;'></div>
<div class='c wh' style='left:832px;top:626px;width:115px;'></div>
<div class='c wh' style='left:947px;top:626px;width:61px;'></div>
<div class='c wh' style='left:1009px;top:626px;width:18px;text-align:center;padding-left:0;'></div>
<div class='c wh' style='left:1027px;top:626px;width:17px;text-align:center;padding-left:0;'></div>
<div class='c wh' style='left:1044px;top:626px;width:120px;'></div>
</div>
<div class='a' style='left:57px;top:368px;width:13px;height:269px;background:#c9c9c9;border-left:1px solid #fff'></div>
<div class='a' style='left:56px;top:362px;width:15px;height:15px;background:#d2d2d2;border:1px solid #8293ad;border-radius:7px 7px 1px 1px;box-shadow:inset 1px 1px 0 #fff'></div>
<div class='a' style='left:60px;top:367px;width:0;height:0;border-left:4px solid transparent;border-right:4px solid transparent;border-bottom:4px solid #607593'></div>
<div class='a' style='left:56px;top:629px;width:15px;height:15px;background:#d2d2d2;border:1px solid #8293ad;border-radius:1px 1px 7px 7px;box-shadow:inset 1px 1px 0 #fff'></div>
<div class='a' style='left:60px;top:635px;width:0;height:0;border-left:4px solid transparent;border-right:4px solid transparent;border-top:4px solid #607593'></div>
<div class='a' style='left:65px;top:462px;width:2px;height:2px;background:#fff;box-shadow:1px 1px 0 #9aa'></div><div class='a' style='left:61px;top:466px;width:2px;height:2px;background:#fff;box-shadow:1px 1px 0 #9aa'></div><div class='a' style='left:65px;top:470px;width:2px;height:2px;background:#fff;box-shadow:1px 1px 0 #9aa'></div><div class='a' style='left:61px;top:474px;width:2px;height:2px;background:#fff;box-shadow:1px 1px 0 #9aa'></div><div class='a' style='left:65px;top:478px;width:2px;height:2px;background:#fff;box-shadow:1px 1px 0 #9aa'></div><div class='a' style='left:61px;top:482px;width:2px;height:2px;background:#fff;box-shadow:1px 1px 0 #9aa'></div><div class='a' style='left:65px;top:486px;width:2px;height:2px;background:#fff;box-shadow:1px 1px 0 #9aa'></div><div class='a' style='left:61px;top:490px;width:2px;height:2px;background:#fff;box-shadow:1px 1px 0 #9aa'></div><div class='a' style='left:65px;top:494px;width:2px;height:2px;background:#fff;box-shadow:1px 1px 0 #9aa'></div><div class='a' style='left:61px;top:498px;width:2px;height:2px;background:#fff;box-shadow:1px 1px 0 #9aa'></div><div class='a' style='left:65px;top:502px;width:2px;height:2px;background:#fff;box-shadow:1px 1px 0 #9aa'></div><div class='a' style='left:61px;top:506px;width:2px;height:2px;background:#fff;box-shadow:1px 1px 0 #9aa'></div><div class='a' style='left:65px;top:510px;width:2px;height:2px;background:#fff;box-shadow:1px 1px 0 #9aa'></div><div class='a' style='left:61px;top:514px;width:2px;height:2px;background:#fff;box-shadow:1px 1px 0 #9aa'></div><div class='a' style='left:65px;top:518px;width:2px;height:2px;background:#fff;box-shadow:1px 1px 0 #9aa'></div><div class='a' style='left:61px;top:522px;width:2px;height:2px;background:#fff;box-shadow:1px 1px 0 #9aa'></div><div class='a' style='left:65px;top:526px;width:2px;height:2px;background:#fff;box-shadow:1px 1px 0 #9aa'></div>
<div class='c' style='left:238px;top:645px;width:53px;height:19px;background:#e2e2e2;text-align:right;padding-right:3px;font-size:11px'>300.000</div>
<div class='a' style='left:69px;top:654px;width:117px;height:17px;border-top:1px solid #fff;border-left:1px solid #fff;border-right:1px solid #8293ad;border-bottom:1px solid #8293ad;border-radius:2px'></div>
<div class='t' style='left:106px;top:658px;font-size:11px;color:#6f83a0'>SQL kód</div>
<div class='a' style='left:436px;top:667px;width:702px;height:15px;background:#94a5b9'></div>
<div class='a' style='left:450px;top:667px;width:309px;height:15px;background:#cacaca;border-top:1px solid #8a9cb4;border-bottom:1px solid #8a9cb4;border-left:1px solid #6a7f9c;box-shadow:inset 1px 1px 0 #fff'></div>
<div class='a' style='left:437px;top:668px;width:14px;height:13px;background:#d2d2d2;border-left:1px solid #fff;border-top:1px solid #fff;border-radius:7px 0 0 7px'></div>
<div class='a' style='left:442px;top:671px;width:0;height:0;border-top:4px solid transparent;border-bottom:4px solid transparent;border-right:4px solid #607593'></div>
<div class='a' style='left:1123px;top:668px;width:14px;height:13px;background:#d2d2d2;border-left:1px solid #fff;border-top:1px solid #fff;border-radius:0 7px 7px 0'></div>
<div class='a' style='left:1128px;top:671px;width:0;height:0;border-top:4px solid transparent;border-bottom:4px solid transparent;border-left:4px solid #607593'></div>
<div class='a' style='left:561px;top:672px;width:2px;height:2px;background:#fff;box-shadow:1px 1px 0 #8a9cb4'></div><div class='a' style='left:569px;top:672px;width:2px;height:2px;background:#fff;box-shadow:1px 1px 0 #8a9cb4'></div><div class='a' style='left:577px;top:672px;width:2px;height:2px;background:#fff;box-shadow:1px 1px 0 #8a9cb4'></div><div class='a' style='left:585px;top:672px;width:2px;height:2px;background:#fff;box-shadow:1px 1px 0 #8a9cb4'></div><div class='a' style='left:593px;top:672px;width:2px;height:2px;background:#fff;box-shadow:1px 1px 0 #8a9cb4'></div><div class='a' style='left:601px;top:672px;width:2px;height:2px;background:#fff;box-shadow:1px 1px 0 #8a9cb4'></div><div class='a' style='left:609px;top:672px;width:2px;height:2px;background:#fff;box-shadow:1px 1px 0 #8a9cb4'></div><div class='a' style='left:617px;top:672px;width:2px;height:2px;background:#fff;box-shadow:1px 1px 0 #8a9cb4'></div><div class='a' style='left:625px;top:672px;width:2px;height:2px;background:#fff;box-shadow:1px 1px 0 #8a9cb4'></div><div class='a' style='left:633px;top:672px;width:2px;height:2px;background:#fff;box-shadow:1px 1px 0 #8a9cb4'></div><div class='a' style='left:641px;top:672px;width:2px;height:2px;background:#fff;box-shadow:1px 1px 0 #8a9cb4'></div><div class='a' style='left:649px;top:672px;width:2px;height:2px;background:#fff;box-shadow:1px 1px 0 #8a9cb4'></div><div class='a' style='left:557px;top:676px;width:2px;height:2px;background:#fff;box-shadow:1px 1px 0 #8a9cb4'></div><div class='a' style='left:565px;top:676px;width:2px;height:2px;background:#fff;box-shadow:1px 1px 0 #8a9cb4'></div><div class='a' style='left:573px;top:676px;width:2px;height:2px;background:#fff;box-shadow:1px 1px 0 #8a9cb4'></div><div class='a' style='left:581px;top:676px;width:2px;height:2px;background:#fff;box-shadow:1px 1px 0 #8a9cb4'></div><div class='a' style='left:589px;top:676px;width:2px;height:2px;background:#fff;box-shadow:1px 1px 0 #8a9cb4'></div><div class='a' style='left:597px;top:676px;width:2px;height:2px;background:#fff;box-shadow:1px 1px 0 #8a9cb4'></div><div class='a' style='left:605px;top:676px;width:2px;height:2px;background:#fff;box-shadow:1px 1px 0 #8a9cb4'></div><div class='a' style='left:613px;top:676px;width:2px;height:2px;background:#fff;box-shadow:1px 1px 0 #8a9cb4'></div><div class='a' style='left:621px;top:676px;width:2px;height:2px;background:#fff;box-shadow:1px 1px 0 #8a9cb4'></div><div class='a' style='left:629px;top:676px;width:2px;height:2px;background:#fff;box-shadow:1px 1px 0 #8a9cb4'></div><div class='a' style='left:637px;top:676px;width:2px;height:2px;background:#fff;box-shadow:1px 1px 0 #8a9cb4'></div><div class='a' style='left:645px;top:676px;width:2px;height:2px;background:#fff;box-shadow:1px 1px 0 #8a9cb4'></div><div class='a' style='left:653px;top:676px;width:2px;height:2px;background:#fff;box-shadow:1px 1px 0 #8a9cb4'></div>
<div class='a' style='left:3px;top:698px;width:1153px;height:38px;border:1px solid #8a9ab0;border-top-color:#2a3850;border-left-color:#2a3850;border-radius:8px'></div>
<div class='t' style='left:10px;top:703px;font-size:12px;color:#f0f0f0'>Název účetního pravidla: Poplatky - konference, semináře</div>
<div class='a' style='left:10px;top:717px;width:1138px;height:1px;background:#2a3344'></div>
<div class='t' style='left:10px;top:721px;font-size:12px;color:#f0f0f0'>Záznam: 1/1</div>
<div class='a' style='left:140px;top:718px;width:1px;height:16px;background:#2a3344'></div>
<div class='a' style='left:168px;top:718px;width:1px;height:16px;background:#2a3344'></div>
<div class='a' style='left:247px;top:718px;width:1px;height:16px;background:#2a3344'></div>
<div class='a' style='left:348px;top:718px;width:1px;height:16px;background:#2a3344'></div>
<div class='a' style='left:403px;top:718px;width:1px;height:16px;background:#2a3344'></div>
<div class='a' style='left:1140px;top:700px;width:1px;height:16px;background:#2a3344'></div>
<div class='t' style='left:231px;top:721px;font-size:12px;color:#f0f0f0'>...</div>
<div class='t' style='left:411px;top:721px;font-size:12px;color:#f0f0f0'>&lt;OSC&gt;</div>
</body></html>
